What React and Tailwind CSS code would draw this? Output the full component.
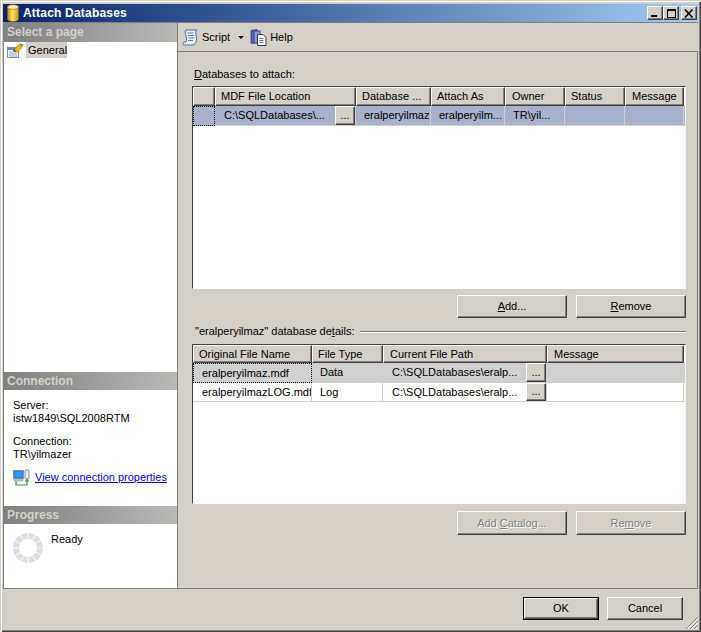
import React from "react";

const btn = "flex items-center justify-center bg-[#d4d0c8] border border-t-white border-l-white border-r-[#404040] border-b-[#404040] shadow-[inset_-1px_-1px_0_#808080]";
const hdr = "flex items-center shrink-0 h-full bg-[#d4d0c8] border border-t-white border-l-white border-r-[#404040] border-b-[#404040] shadow-[inset_-1px_-1px_0_#808080] whitespace-nowrap overflow-hidden";
const tableBox = "flex flex-col bg-white border border-t-[#404040] border-l-[#404040] border-r-[#f4f4f0] border-b-white";
const sectionHead = "flex items-center pl-[3px] text-[12px] font-bold text-[#d4d0c8] bg-gradient-to-r from-[#808080] to-[#b9b9b6]";

function DbIcon() {
  return (
    <svg width="14" height="18" viewBox="0 0 14 18" className="shrink-0">
      <defs>
        <linearGradient id="db" x1="0" x2="1" y1="0" y2="0">
          <stop offset="0" stopColor="#b88a10" />
          <stop offset="0.45" stopColor="#ffe26a" />
          <stop offset="1" stopColor="#c99a18" />
        </linearGradient>
      </defs>
      <path d="M1.5 3v12c0 1.5 2.5 2.5 5.5 2.5s5.5-1 5.5-2.5V3z" fill="url(#db)" stroke="#8a6a10" strokeWidth="0.6" />
      <ellipse cx="7" cy="3" rx="5.5" ry="2.3" fill="#ffeeb0" stroke="#8a6a10" strokeWidth="0.6" />
    </svg>
  );
}

function GeneralIcon() {
  return (
    <svg width="17" height="15" viewBox="0 0 17 15" className="shrink-0">
      <rect x="0.5" y="4.5" width="11" height="10" fill="#fff" stroke="#7a8aa8" />
      <rect x="1" y="5" width="10" height="2" fill="#5a86d0" />
      <path d="M2 9h8M2 11h8M2 13h8" stroke="#8aa0c8" />
      <path d="M6 8 12 1.5l4 1.5-5 6z" fill="#f0b020" stroke="#a07010" strokeWidth="0.5" />
      <path d="M12 1.5 16 3l.5-1.5L13 .5z" fill="#40a040" />
      <path d="M6 8l1.5-1.5 2 2z" fill="#602010" />
    </svg>
  );
}

function ScriptIcon() {
  return (
    <svg width="17" height="17" viewBox="0 0 17 17" className="shrink-0">
      <path d="M4 1h11c-1.5 1-1.5 3-1 5s1 5 0 7c-.5 1-1.5 2-3 3H2c-1 0-1.500-1-1-2s2-1 3-1c1-2 .5-4 0-6S2.500 2 4 1z" fill="#e8eef8" stroke="#4a6a98" strokeWidth="1" />
      <path d="M5.500 4h6M6 6.500h6M6.500 9h6M6 11.500h5" stroke="#5a7aa8" strokeWidth="1" />
    </svg>
  );
}

function HelpIcon() {
  return (
    <svg width="17" height="17" viewBox="0 0 17 17" className="shrink-0">
      <path d="M1 1.500 7 .5v13l-6 1z" fill="#5a64b0" stroke="#2a3480" strokeWidth="0.8" />
      <rect x="4" y="2" width="6" height="12" fill="#8a94d0" stroke="#2a3480" strokeWidth="0.8" />
      <path d="M7.500 5.500H13l3 3v8H7.500z" fill="#fff" stroke="#303858" strokeWidth="1" />
      <path d="M9.500 9.500h4M9.500 11.500h4M9.500 13.500h4" stroke="#5a6a98" />
    </svg>
  );
}

function ConnIcon() {
  return (
    <svg width="17" height="17" viewBox="0 0 17 17" className="shrink-0">
      <rect x="0.500" y="1.500" width="10" height="8" fill="#3a7ae0" stroke="#8090b0" />
      <rect x="2" y="3" width="7" height="5" fill="#2a9af0" />
      <rect x="1" y="10" width="9" height="2" fill="#c0c8d8" stroke="#8090a8" strokeWidth="0.5" />
      <rect x="12" y="1" width="4" height="9" rx="1" fill="#e4e8f0" stroke="#8a8fa0" />
      <path d="M3 12v4h11v-4" fill="none" stroke="#30a030" strokeWidth="1.200" />
      <path d="M11.500 12.500 14 9.500l2.500 3z" fill="#30a030" />
    </svg>
  );
}

function Spinner() {
  return (
    <svg width="30" height="30" viewBox="0 0 30 30" className="shrink-0">
      <circle cx="15" cy="15" r="12" fill="none" stroke="#dedede" strokeWidth="6" strokeDasharray="5.280 1" />
    </svg>
  );
}

function Ctl({ children, cls }) {
  return <div className={"w-[16px] h-[14px] " + btn + " " + (cls || "")}>{children}</div>;
}

function Head({ w, pl, children }) {
  return (
    <div className={hdr} style={{ width: w, paddingLeft: pl }}>
      {children}
    </div>
  );
}

function Cell({ w, pl, children, end }) {
  return (
    <div
      className="flex items-center shrink-0 h-full border-r border-b border-[#d4d0c8] whitespace-nowrap overflow-hidden"
      style={{ width: w, paddingLeft: pl }}
    >
      <span className="flex-1">{children}</span>
      {end}
    </div>
  );
}

function Dots({ w }) {
  return (
    <div className={"shrink-0 h-full flex items-end justify-center pb-[2px] " + btn} style={{ width: w }}>
      ...
    </div>
  );
}

export default function App() {
  return (
    <div className="relative w-[701px] h-[632px] flex flex-col px-[3px] pt-[4px] pb-[2px] bg-[#d4d0c8] text-black text-[11px] leading-[13px] overflow-hidden font-['Liberation_Sans',Arial,sans-serif] shadow-[inset_1px_1px_0_#d4d0c8,inset_2px_2px_0_#fff,inset_-1px_-1px_0_#404040,inset_-2px_-2px_0_#808080]">
      {/* title bar */}
      <div className="h-[18px] shrink-0 flex items-center pl-[3px] pr-[1px] bg-gradient-to-r from-[#0a246a] to-[#a6caf0]">
        <DbIcon />
        <span className="ml-[3px] text-white font-bold text-[12px] tracking-[0.2px] flex-1">Attach Databases</span>
        <div className="flex items-center">
          <Ctl cls="items-end pb-[2px]">
            <div className="w-[6px] h-[2px] bg-black mr-[3px]" />
          </Ctl>
          <Ctl>
            <div className="w-[9px] h-[9px] border border-t-2 border-black" />
          </Ctl>
          <Ctl cls="ml-[2px]">
            <svg width="10" height="9" viewBox="0 0 10 9">
              <path d="M1 0.500l7.500 8M8.500 0.500l-7.500 8" stroke="#000" strokeWidth="1.600" />
            </svg>
          </Ctl>
        </div>
      </div>

      {/* frame */}
      <div className="h-[567px] shrink-0 flex border-t border-l border-b border-[#808080]">
        {/* left */}
        <aside className="w-[174px] shrink-0 flex flex-col bg-white border-r border-[#808080]">
          <div className={sectionHead + " h-[19px]"}>Select a page</div>
          <div className="flex-1">
            <div className="flex items-center h-[16px] pl-[3px]">
              <GeneralIcon />
              <span className="ml-[2px] pl-[2px] pr-[1px] h-[16px] flex items-center w-[41px] bg-[#d4d0c8]">General</span>
            </div>
          </div>
          <div className="h-[134px] shrink-0 flex flex-col">
            <div className={sectionHead + " h-[18px]"}>Connection</div>
            <div className="pl-[9px] pt-[9px]">
              <div>Server:</div>
              <div>istw1849\SQL2008RTM</div>
              <div className="mt-[10px]">Connection:</div>
              <div>TR\yilmazer</div>
              <div className="mt-[8px] flex items-center">
                <ConnIcon />
                <span className="ml-[5px] text-[#0000ff] underline">View connection properties</span>
              </div>
            </div>
          </div>
          <div className="h-[82px] shrink-0 flex flex-col">
            <div className={sectionHead + " h-[18px]"}>Progress</div>
            <div className="flex pl-[9px] pt-[9px]">
              <Spinner />
              <span className="ml-[8px]">Ready</span>
            </div>
          </div>
        </aside>

        {/* right */}
        <main className="flex-1 flex flex-col">
          <div className="h-[29px] shrink-0 flex items-center pl-[4px] border-b border-[#808080]">
            <ScriptIcon />
            <span className="ml-[3px]">Script</span>
            <svg width="6" height="3" viewBox="0 0 6 3" className="ml-[8px]">
              <path d="M0 0h6L3 3z" fill="#000" />
            </svg>
            <span className="ml-[6px]"><HelpIcon /></span>
            <span className="ml-[3px]">Help</span>
          </div>

          <div className="flex-1 flex flex-col pl-[14px] pt-[16px] pr-[11px] border-r border-[#808080]">
            <div className="pl-[2px]"><span className="underline">D</span>atabases to attach:</div>

            <div className={tableBox + " mt-[5px] h-[203px]"}>
              <div className="h-[19px] flex shrink-0">
                <Head w={22} pl={0} />
                <Head w={141} pl={5}>MDF File Location</Head>
                <Head w={75} pl={5}>Database ...</Head>
                <Head w={74} pl={5}>Attach As</Head>
                <Head w={60} pl={6}>Owner</Head>
                <Head w={60} pl={5}>Status</Head>
                <Head w={59} pl={6}>Message</Head>
              </div>
              <div className="h-[20px] flex shrink-0 bg-[#a8b0ca]">
                <div className="w-[22px] h-full shrink-0 border border-dotted border-black" />
                <Cell w={141} pl={9} end={<Dots w={20} />}>C:\SQLDatabases\...</Cell>
                <Cell w={75} pl={8}>eralperyilmaz</Cell>
                <Cell w={74} pl={8}>eralperyilm...</Cell>
                <Cell w={60} pl={8}>TR\yil...</Cell>
                <Cell w={60} />
                <Cell w={59} />
              </div>
            </div>

            <div className="mt-[6px] flex justify-end gap-[9px] pr-0">
              <div className={btn + " w-[110px] h-[23px]"}><span><span className="underline">A</span>dd...</span></div>
              <div className={btn + " w-[110px] h-[23px]"}><span><span className="underline">R</span>emove</span></div>
            </div>

            <div className="mt-[7px] flex items-center pl-[3px]">
              <span>"eralperyilmaz" database de<span className="underline">t</span>ails:</span>
              <div className="flex-1 ml-[6px] h-[2px] border-t border-[#808080] border-b-white border-b" />
            </div>

            <div className={tableBox + " mt-[6px] h-[160px]"}>
              <div className="h-[18px] flex shrink-0">
                <Head w={119} pl={5}>Original File Name</Head>
                <Head w={71} pl={5}>File Type</Head>
                <Head w={164} pl={6}>Current File Path</Head>
                <Head w={137} pl={6}>Message</Head>
              </div>
              <div className="h-[20px] flex shrink-0 bg-[#d0d0d0]">
                <div className="w-[119px] h-full shrink-0 flex items-center pl-[8px] border border-dotted border-black whitespace-nowrap">eralperyilmaz.mdf</div>
                <Cell w={71} pl={8}>Data</Cell>
                <Cell w={164} pl={9} end={<Dots w={20} />}>C:\SQLDatabases\eralp...</Cell>
                <Cell w={137} />
              </div>
              <div className="h-[19px] flex shrink-0">
                <Cell w={119} pl={9}>eralperyilmazLOG.mdf</Cell>
                <Cell w={71} pl={8}>Log</Cell>
                <Cell w={164} pl={9} end={<Dots w={20} />}>C:\SQLDatabases\eralp...</Cell>
                <Cell w={137} />
              </div>
            </div>

            <div className="mt-[7px] flex justify-end gap-[9px] text-[#808080] [text-shadow:1px_1px_0_#fff]">
              <div className={btn + " w-[110px] h-[24px]"}><span>Add <span className="underline">C</span>atalog...</span></div>
              <div className={btn + " w-[110px] h-[24px]"}><span>Re<span className="underline">m</span>ove</span></div>
            </div>
          </div>
        </main>
      </div>

      {/* footer */}
      <div className="flex-1 flex justify-end items-start pt-[8px] pr-[15px] gap-[8px]">
        <div className="w-[76px] h-[23px] flex border border-black">
          <div className={btn + " flex-1"}>OK</div>
        </div>
        <div className={btn + " w-[76px] h-[23px]"}>Cancel</div>
      </div>

      <svg width="14" height="14" viewBox="0 0 14 14" className="absolute right-[2px] bottom-[2px]">
        <path d="M13 1 1 13M13 5 5 13M13 9 9 13" stroke="#808080" strokeWidth="1" />
        <path d="M13 2.500 2.500 13M13 6.500 6.500 13M13 10.500 10.500 13" stroke="#fff" strokeWidth="1" />
      </svg>
    </div>
  );
}
